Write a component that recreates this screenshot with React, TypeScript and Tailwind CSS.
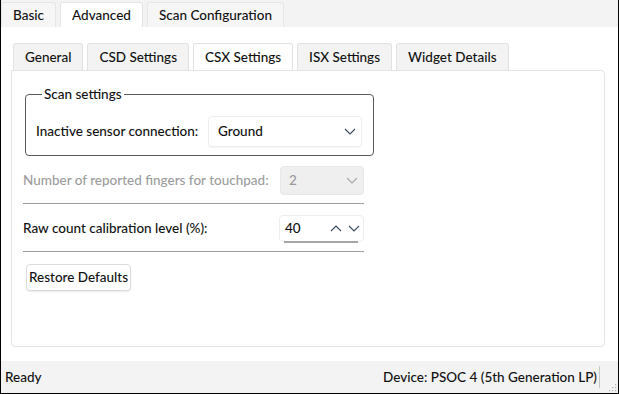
import React from 'react';

function Chevron({ up = false, muted = false }: { up?: boolean; muted?: boolean }) {
  return (
    <svg width="12" height="7" viewBox="0 0 12 7" className="shrink-0">
      <path
        d={up ? 'M1 6 L6 1 L11 6' : 'M1 1 L6 6 L11 1'}
        fill="none"
        stroke={muted ? '#a8a8a8' : '#3a4a60'}
        strokeWidth="1.1"
      />
    </svg>
  );
}

function TopTab({ label, active = false }: { label: string; active?: boolean }) {
  return (
    <div
      className={`h-[25px] px-[11px] flex items-center border border-b-0 rounded-t-[3px] ${
        active ? 'bg-white border-[#e4e4e4]' : 'bg-[#f6f6f6] border-[#e6e6e6]'
      }`}
    >
      {label}
    </div>
  );
}

function InnerTab({ label, active = false }: { label: string; active?: boolean }) {
  return (
    <div
      className={`h-[27px] px-[11px] flex items-center border border-b-0 rounded-t-[3px] ${
        active ? 'bg-white border-[#e2e2e2]' : 'bg-[#f3f3f3] border-[#e2e2e2]'
      }`}
    >
      {label}
    </div>
  );
}

export default function App() {
  return (
    <div className="w-[619px] h-[394px] flex flex-col bg-white border-l border-r border-b border-black text-[13.5px] font-medium text-[#111111] font-['Lato',sans-serif] overflow-hidden">
      <div className="h-[27px] bg-[#f3f3f3] flex items-end gap-[4px] shrink-0">
        <TopTab label="Basic" />
        <TopTab label="Advanced" active />
        <TopTab label="Scan Configuration" />
      </div>

      <div className="flex-1 flex flex-col pt-[16px] pl-[10px] pr-[13px] pb-[14px]">
        <div className="flex gap-[4px] ml-[2px]">
          <InnerTab label="General" />
          <InnerTab label="CSD Settings" />
          <InnerTab label="CSX Settings" active />
          <InnerTab label="ISX Settings" />
          <InnerTab label="Widget Details" />
        </div>
        <div className="flex-1 border border-[#e4e4e4] rounded-[4px] rounded-tl-none pl-[11px] pt-[16px]">
          <fieldset className="ml-[2px] w-[349px] h-[69px] border border-[#5a5a5a] rounded-[4px] pl-[10px] pr-[11px]">
            <legend className="ml-[6px] px-[2px] leading-[14px]">Scan settings</legend>
            <div className="flex items-center justify-between mt-[15px]">
              <span>Inactive sensor connection:</span>
              <div className="w-[154px] h-[31px] bg-white border border-[#eeeeee] rounded-[4px] shadow-[0_1px_1px_rgba(0,0,0,0.04)] flex items-center justify-between pl-[9px] pr-[5px]">
                <span>Ground</span>
                <Chevron />
              </div>
            </div>
          </fieldset>

          <div className="w-[341px] mt-[10px]">
            <div className="flex items-center justify-between pb-[8px] border-b border-[#9c9c9c]">
              <span className="text-[#9d9d9d]">Number of reported fingers for touchpad:</span>
              <div className="w-[84px] h-[29px] bg-[#efefef] border border-[#e8e8e8] rounded-[4px] flex items-center justify-between pl-[8px] pr-[5px] text-[#9a9a9a]">
                <span>2</span>
                <Chevron muted />
              </div>
            </div>
            <div className="flex items-center justify-between pt-[11px] pb-[9px] border-b border-[#9c9c9c]">
              <span>Raw count calibration level (%):</span>
              <div className="relative w-[85px] h-[27px] bg-white border border-[#eeeeee] rounded-[4px] flex items-center pl-[5px] pr-[3px]">
                <span className="flex-1">40</span>
                <div className="flex items-center gap-[6px]">
                  <Chevron up />
                  <Chevron />
                </div>
                <div className="absolute left-[4px] right-[5px] bottom-[-2px] h-[2px] bg-[#a6a6a6]" />
              </div>
            </div>
            <button className="mt-[12px] ml-[3px] h-[27px] px-[2px] bg-white border border-[#dcdcdc] rounded-[4px] shadow-[0_1px_1px_rgba(0,0,0,0.08)] font-medium text-[#111111]">
              Restore Defaults
            </button>
          </div>
        </div>
      </div>

      <div className="h-[32px] bg-[#f3f3f3] flex items-center shrink-0 pl-[4px] relative">
        <span className="flex-1">Ready</span>
        <span className="pr-[2px]">Device: PSOC 4 (5th Generation LP)</span>
        <div className="w-px h-[22px] bg-[#c8c8c8] mr-[18px]" />
        <svg width="10" height="10" viewBox="0 0 10 10" className="absolute right-[1px] bottom-[1px]">
          <g fill="#b0b0b0">
            <rect x="8" y="2" width="1.2" height="1.2" />
            <rect x="5" y="5" width="1.2" height="1.2" />
            <rect x="8" y="5" width="1.2" height="1.2" />
            <rect x="2" y="8" width="1.2" height="1.2" />
            <rect x="5" y="8" width="1.2" height="1.2" />
            <rect x="8" y="8" width="1.2" height="1.2" />
          </g>
        </svg>
      </div>
    </div>
  );
}
